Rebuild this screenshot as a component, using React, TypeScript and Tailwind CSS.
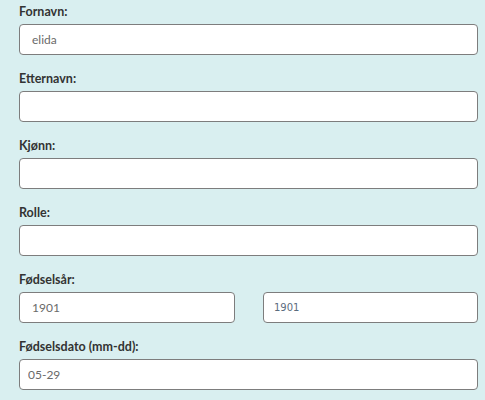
import React from "react";

const font = { fontFamily: "'Source Sans Pro', Lato, 'Open Sans', sans-serif" };

function Label({ children }: { children: React.ReactNode }) {
  return (
    <label className="block h-[24px] pt-[2px] text-[12.5px] leading-[20px] font-bold text-[#333]">
      {children}
    </label>
  );
}

function Field({ value = "", className = "" }: { value?: string; className?: string }) {
  return (
    <input
      readOnly
      value={value}
      className={
        "block h-[31px] w-full rounded-[4px] border border-[#7d7d7d] bg-white text-[12px] text-[#6a6a6a] outline-none " +
        className
      }
    />
  );
}

export default function App() {
  return (
    <div className="min-h-[400px] w-[485px] bg-[#d9eff0] pl-[19px] pr-[7px]" style={font}>
      <div className="flex flex-col gap-[12px]">
        <div>
          <Label>Fornavn:</Label>
          <Field value="elida" className="px-[12px]" />
        </div>
        <div>
          <Label>Etternavn:</Label>
          <Field className="px-[12px]" />
        </div>
        <div>
          <Label>Kjønn:</Label>
          <Field className="px-[12px]" />
        </div>
        <div>
          <Label>Rolle:</Label>
          <Field className="px-[12px]" />
        </div>
        <div>
          <Label>Fødselsår:</Label>
          <div className="flex gap-[28px]">
            <div className="w-[216px]">
              <Field value="1901" className="px-[12px]" />
            </div>
            <div className="flex-1">
              <input
                readOnly
                value="1901"
                className="block h-[31px] w-full rounded-[4px] border border-[#7d7d7d] bg-white px-[10px] text-[10px] text-[#5b6b7e] outline-none"
                style={{ fontFamily: "'DejaVu Sans', Verdana, sans-serif" }}
              />
            </div>
          </div>
        </div>
        <div>
          <Label>Fødselsdato (mm-dd):</Label>
          <Field value="05-29" className="px-[8px]" />
        </div>
      </div>
    </div>
  );
}
